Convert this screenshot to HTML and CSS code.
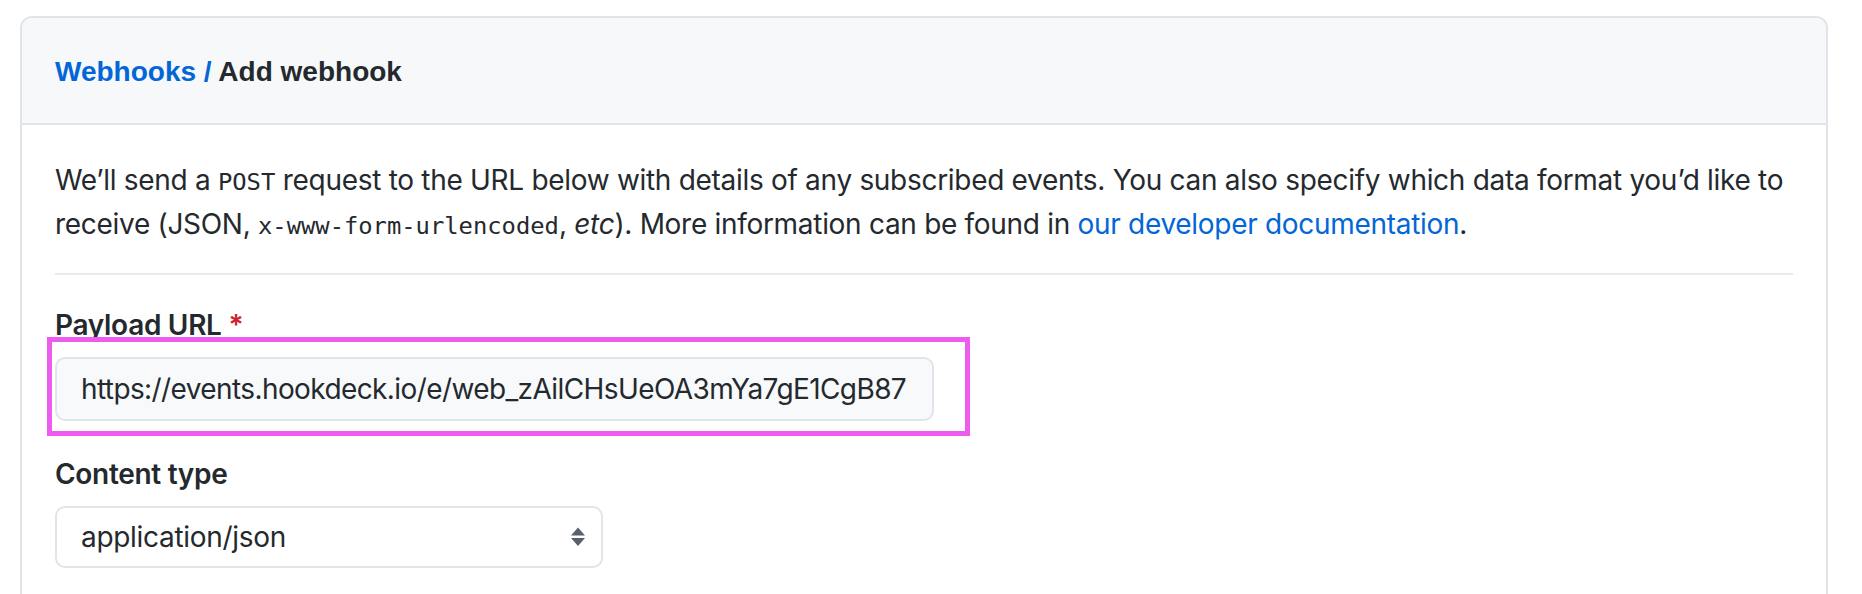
FILE: index.html
```html
<!DOCTYPE html>
<html lang="en">
<head>
<meta charset="utf-8">
<title>Add webhook</title>
<link rel="stylesheet" href="styles.css">
</head>
<body>
<div class="page">
  <div class="box">
    <div class="box-header">
      <h2 class="crumbs"><a href="#" class="crumb-link">Webhooks /</a> Add webhook</h2>
    </div>
    <div class="box-body">
      <p class="intro">We’ll send a <code>POST</code> request to the URL below with details of any subscribed events. You can also specify which data format you’d like to receive (JSON, <code>x-www-form-urlencoded</code>, <em>etc</em>). More information can be found in <a href="#" class="doc-link">our developer documentation</a>.</p>
      <hr class="sep">
      <div class="field">
        <label class="field-label" for="url">Payload URL <span class="req">*</span></label>
        <div class="input-wrap">
          <input id="url" class="text-input" type="text" value="https://events.hookdeck.io/e/web_zAilCHsUeOA3mYa7gE1CgB87">
          <div class="highlight"></div>
        </div>
      </div>
      <div class="field field-next">
        <label class="field-label" for="ctype">Content type</label>
        <div class="select-wrap">
          <select id="ctype" class="select">
            <option>application/json</option>
            <option>application/x-www-form-urlencoded</option>
          </select>
          <svg class="select-arrows" width="16" height="20" viewBox="0 0 16 20" aria-hidden="true">
            <path d="M8 0.5 L15 8.5 L1 8.5 Z" fill="#586069"/>
            <path d="M1 11 L15 11 L8 19 Z" fill="#586069"/>
          </svg>
        </div>
      </div>
    </div>
  </div>
</div>
</body>
</html>
```

FILE: styles.css
```css
* { box-sizing: border-box; }

html, body {
  margin: 0;
  padding: 0;
  background: #ffffff;
}

body {
  font-family: Inter, "Noto Sans", "Liberation Sans", sans-serif;
  color: #24292e;
  font-size: 28px;
  line-height: 42px;
  letter-spacing: -0.3px;
}

.page {
  padding: 16px 34px 0 20px;
}

.box {
  border: 2px solid #e1e4e8;
  border-bottom: none;
  border-radius: 12px 12px 0 0;
  height: 600px;
}

.box-header {
  background: #f6f8fa;
  border-bottom: 2px solid #e1e4e8;
  border-radius: 10px 10px 0 0;
  padding: 33px 33px 30px 33px;
}

.crumbs {
  margin: 0;
  font-family: "Liberation Sans", Arial, sans-serif;
  font-weight: 700;
  font-size: 28px;
  line-height: 42px;
  letter-spacing: 0;
  color: #24292e;
}

.crumb-link {
  color: #0366d6;
  text-decoration: none;
}

.box-body {
  padding: 34px 33px 0 33px;
}

.intro {
  margin: 0;
}

.intro code {
  font-family: "DejaVu Sans Mono", "Liberation Mono", monospace;
  font-size: 23.8px;
  letter-spacing: 0;
}

.doc-link {
  color: #0366d6;
  text-decoration: none;
}

.sep {
  border: 0;
  height: 2px;
  background: #e9ebee;
  margin: 26px 0 0 0;
}

.field {
  margin-top: 29px;
}

.field-next {
  margin-top: 32px;
}

.field-label {
  display: block;
  font-weight: 600;
  margin-bottom: 11px;
}

.req {
  color: #cb2431;
}

.input-wrap {
  position: relative;
  width: 879px;
}

.text-input {
  display: block;
  width: 879px;
  height: 64px;
  margin: 0;
  padding: 0 24px;
  border: 2px solid #e1e4e8;
  border-radius: 10px;
  background: #f7f9fb;
  font-family: Inter, "Noto Sans", sans-serif;
  font-size: 28px;
  letter-spacing: -0.6px;
  color: #24292e;
  outline: none;
}

.highlight {
  position: absolute;
  left: -8px;
  top: -20px;
  width: 923px;
  height: 99px;
  border: 5px solid #ee5bef;
  pointer-events: none;
}

.select-wrap {
  position: relative;
  width: 548px;
}

.select {
  display: block;
  width: 548px;
  height: 62px;
  margin: 0;
  padding: 0 24px;
  border: 2px solid #e1e4e8;
  border-radius: 10px;
  background: #ffffff;
  font-family: Inter, "Noto Sans", sans-serif;
  font-size: 28px;
  letter-spacing: -0.3px;
  color: #24292e;
  appearance: none;
  -webkit-appearance: none;
  outline: none;
}

.select-arrows {
  position: absolute;
  right: 17px;
  top: 21px;
}
```
